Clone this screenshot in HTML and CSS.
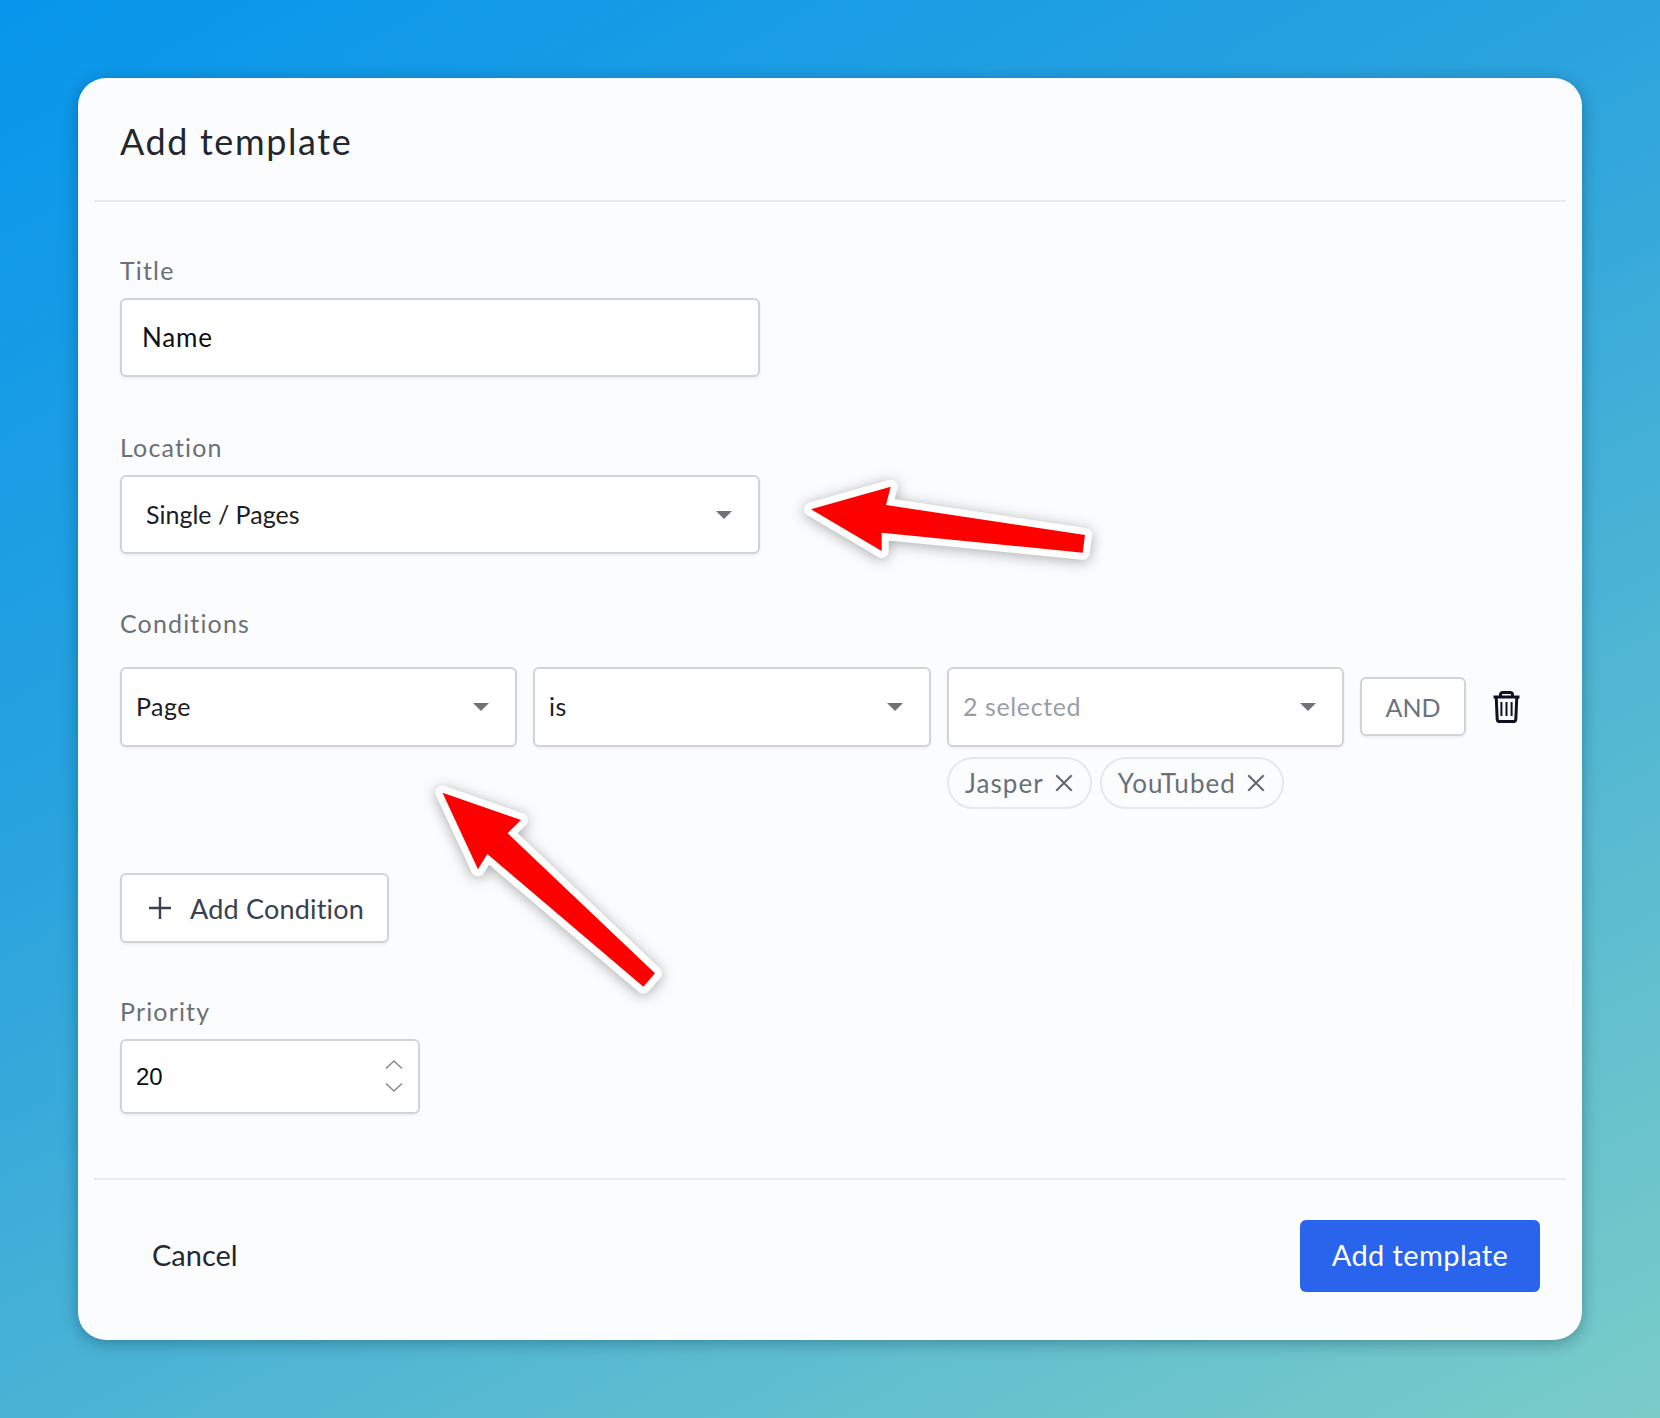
FILE: index.html
```html
<!DOCTYPE html>
<html lang="en">
<head>
<meta charset="utf-8">
<title>Add template</title>
<link rel="stylesheet" href="styles.css">
</head>
<body>
<main class="card">
  <header class="head"><h1 class="heading">Add template</h1></header>
  <section class="body">
    <label class="label">Title</label>
    <div class="control control-name">Name</div>

    <label class="label label-location">Location</label>
    <div class="control control-select control-location">
      <span>Single / Pages</span><i class="caret"></i>
    </div>

    <label class="label label-conditions">Conditions</label>
    <div class="conditions">
      <div class="control control-select cond"><span>Page</span><i class="caret"></i></div>
      <div class="control control-select cond cond-op"><span>is</span><i class="caret"></i></div>
      <div class="cond-col">
        <div class="control control-select cond cond-multi"><span class="placeholder">2 selected</span><i class="caret"></i></div>
        <div class="chips">
          <span class="chip">Jasper<svg class="chip-x" viewBox="0 0 14 14"><path d="M1 1l12 12M13 1L1 13"/></svg></span>
          <span class="chip">YouTubed<svg class="chip-x" viewBox="0 0 14 14"><path d="M1 1l12 12M13 1L1 13"/></svg></span>
        </div>
      </div>
      <button class="and">AND</button>
      <svg class="trash" viewBox="0 0 27 32"><path class="trash-line" d="M.5 6h26M7.500 6V3.800C7.500 2.300 8.500 1.500 9.800 1.500h7.400c1.300 0 2.300.8 2.300 2.300V6M3.200 6l1 22.400c.1 1.500 1 2.200 2.300 2.200h14c1.300 0 2.200-.7 2.300-2.200l1-22.400"/><path class="trash-bars" d="M8.400 11v14M13.500 11v14M18.600 11v14"/></svg>
    </div>

    <button class="add-cond">
      <svg class="plus" viewBox="0 0 22 22"><path d="M11 0v22M0 11h22"/></svg>
      <span>Add Condition</span>
    </button>

    <label class="label label-priority">Priority</label>
    <div class="control control-number">
      <span class="num">20</span>
      <span class="stepper">
        <svg viewBox="0 0 18 9"><path d="M1 8.500l8-7.500 8 7.500"/></svg>
        <svg viewBox="0 0 18 9"><path d="M1 .5l8 7.500 8-7.500"/></svg>
      </span>
    </div>
  </section>
  <footer class="foot">
    <button class="cancel">Cancel</button>
    <button class="primary">Add template</button>
  </footer>
</main>

<svg class="arrow arrow-one" viewBox="0 0 320 120"><polygon points="21,69.3 100.7,46.7 96,65 295,95 292.7,112.7 91.7,92.7 91.7,111"/></svg>
<svg class="arrow arrow-two" viewBox="0 0 260 240"><polygon points="22.5,22.7 101,50 87.6,63.3 235,203.3 223.4,216.7 67.3,84 58,99.3"/></svg>
</body>
</html>
```
FILE: styles.css
```css
* { box-sizing: border-box; }
html, body { margin: 0; padding: 0; }
body {
  position: relative;
  width: 1660px;
  height: 1418px;
  padding: 78px;
  overflow: hidden;
  font-family: "Lato", "Open Sans", sans-serif;
  background: linear-gradient(152deg, #0796ec 0%, #2aa3de 38%, #52b7d3 68%, #7accc8 100%);
}
button { font-family: inherit; cursor: pointer; }

.card {
  display: flex;
  flex-direction: column;
  width: 1504px;
  height: 1262px;
  padding: 0 16px;
  background: #fbfcfe;
  border-radius: 28px;
  box-shadow: 0 3px 16px rgba(0, 40, 60, .36);
}

.head {
  display: flex;
  align-items: center;
  height: 124px;
  padding: 4px 26px 0;
  border-bottom: 2px solid #e8eaed;
}
.heading {
  margin: 0;
  font-size: 36px;
  font-weight: 400;
  color: #24282d;
  letter-spacing: 1.6px;
}

.body { flex: 1; padding: 54px 26px 0; }

.label {
  display: block;
  height: 30px;
  margin-bottom: 12px;
  font-size: 25px;
  line-height: 28px;
  letter-spacing: 1.15px;
  color: #6b7075;
}
.label-location { margin-top: 56px; }
.label-conditions { margin-top: 55px; }
.label-priority { margin-top: 54px; }

.control {
  display: flex;
  align-items: center;
  height: 79px;
  width: 640px;
  background: #fff;
  border: 2px solid #d1d3d9;
  border-radius: 6px;
  box-shadow: 0 2px 3px rgba(0, 0, 0, .05);
  font-size: 25px;
  color: #1c2024;
}
.control-name { padding: 0 0 2px 20px; color: #0c0f14; font-size: 26px; letter-spacing: .8px; }
.control-select { justify-content: space-between; padding: 0 26px 2px 14px; }
.control-location { padding: 0 26px 2px 24px; }
.caret {
  width: 0;
  height: 0;
  margin-top: 2px;
  border-left: 8px solid transparent;
  border-right: 8px solid transparent;
  border-top: 8px solid #6f7378;
}

.conditions {
  display: flex;
  align-items: flex-start;
  gap: 16px;
  margin: 28px 0 64px;
}
.cond { width: 397px; height: 80px; flex: none; letter-spacing: .5px; }
.cond-op { width: 398px; }
.cond-col { display: flex; flex-direction: column; gap: 10px; }
.placeholder { color: #9a9ea3; letter-spacing: .6px; }

.chips { display: flex; gap: 8px; }
.chip {
  display: flex;
  align-items: center;
  gap: 11px;
  height: 52px;
  padding: 0 17px 0 16px;
  font-size: 26px;
  letter-spacing: 1.05px;
  color: #6b7075;
  border: 2px solid #e6e8eb;
  border-radius: 26px;
}
.chip-x { width: 18px; height: 18px; fill: none; stroke: #63676c; stroke-width: 1.6; }

.and {
  flex: none;
  width: 106px;
  height: 59px;
  margin: 10px 0 0;
  padding: 0;
  font-size: 25px;
  color: #6b7280;
  background: #fff;
  border: 2px solid #d1d3d9;
  border-radius: 6px;
  box-shadow: 0 2px 3px rgba(0, 0, 0, .05);
}
.trash {
  flex: none;
  width: 27px;
  height: 32px;
  margin: 24px 0 0 11px;
  fill: none;
}
.trash-line { stroke: #0e1220; stroke-width: 3; }
.trash-bars { stroke: #0e1220; stroke-width: 2; }

.add-cond {
  display: flex;
  align-items: center;
  gap: 19px;
  width: 269px;
  height: 70px;
  padding: 0 0 0 27px;
  font-size: 27px;
  letter-spacing: .2px;
  color: #374151;
  background: #fff;
  border: 2px solid #d1d3d9;
  border-radius: 6px;
  box-shadow: 0 2px 3px rgba(0, 0, 0, .05);
}
.plus { width: 22px; height: 22px; fill: none; stroke: #374151; stroke-width: 2.4; }

.control-number {
  justify-content: space-between;
  width: 300px;
  height: 75px;
  padding: 0 15px 0 14px;
}
.num { font-family: "Liberation Sans", Arial, sans-serif; font-size: 24px; color: #0c0f14; }
.stepper { display: flex; flex-direction: column; gap: 14px; margin-bottom: 2px; }
.stepper svg { display: block; width: 18px; height: 9px; fill: none; stroke: #8a8f96; stroke-width: 1.6; }

.foot {
  display: flex;
  align-items: center;
  justify-content: space-between;
  height: 162px;
  padding: 0 26px 8px 32px;
  border-top: 2px solid #e8eaed;
}
.cancel {
  padding: 0 0 4px 26px;
  background: none;
  border: 0;
  font-size: 29px;
  color: #25292e;
}
.primary {
  width: 240px;
  height: 72px;
  padding: 0 0 4px;
  background: #2864ec;
  border: 0;
  border-radius: 6px;
  font-size: 29px;
  color: #fff;
  letter-spacing: .4px;
}

.arrow {
  position: absolute;
  overflow: visible;
  filter: drop-shadow(0 2px 7px rgba(0, 0, 0, .32));
}
.arrow polygon {
  fill: #fe0000;
  stroke: #fff;
  stroke-width: 14px;
  stroke-linejoin: round;
  paint-order: stroke;
}
.arrow-one { left: 790px; top: 440px; width: 320px; height: 120px; }
.arrow-two { left: 420px; top: 770px; width: 260px; height: 240px; }
```
